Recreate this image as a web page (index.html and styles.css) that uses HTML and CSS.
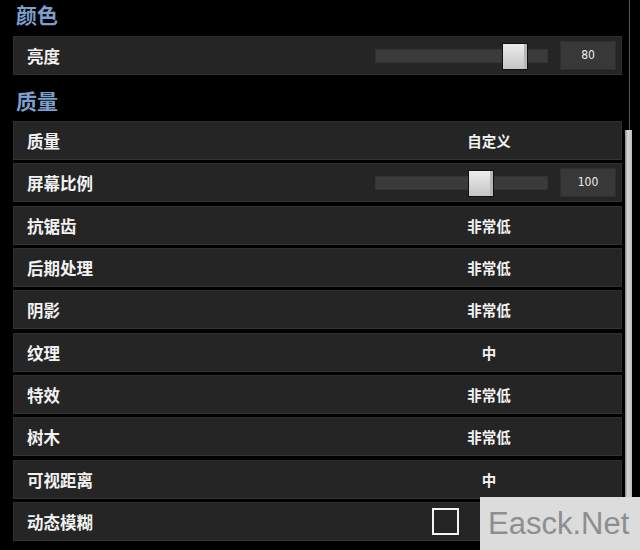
FILE: index.html
```html
<!DOCTYPE html>
<html>

<head>
	<meta charset="utf-8">
	<title>设置</title>
	<link rel="stylesheet" href="styles.css">
</head>

<body>
	<div class="screen">
		<div class="settings">
			<div class="group">
				<h2>颜色</h2>
				<ul class="rows">
					<li class="row">
						<span class="label">亮度</span>
						<div class="slider">
							<div class="track"><span class="thumb" style="left: 126px"></span></div>
							<span class="num">80</span>
						</div>
					</li>
				</ul>
			</div>
			<div class="group">
				<h2>质量</h2>
				<ul class="rows">
					<li class="row">
						<span class="label">质量</span>
						<span class="value">自定义</span>
					</li>
					<li class="row">
						<span class="label">屏幕比例</span>
						<div class="slider">
							<div class="track"><span class="thumb" style="left: 92px"></span></div>
							<span class="num">100</span>
						</div>
					</li>
					<li class="row">
						<span class="label">抗锯齿</span>
						<span class="value">非常低</span>
					</li>
					<li class="row">
						<span class="label">后期处理</span>
						<span class="value">非常低</span>
					</li>
					<li class="row">
						<span class="label">阴影</span>
						<span class="value">非常低</span>
					</li>
					<li class="row">
						<span class="label">纹理</span>
						<span class="value">中</span>
					</li>
					<li class="row">
						<span class="label">特效</span>
						<span class="value">非常低</span>
					</li>
					<li class="row">
						<span class="label">树木</span>
						<span class="value">非常低</span>
					</li>
					<li class="row">
						<span class="label">可视距离</span>
						<span class="value">中</span>
					</li>
					<li class="row">
						<span class="label">动态模糊</span>
						<div class="check"><span class="box"></span></div>
					</li>
				</ul>
			</div>
		</div>
		<div class="scrollbar">
			<span class="rail"></span>
			<span class="grip"></span>
		</div>
	</div>
	<div class="watermark">Easck.Net</div>
</body>

</html>
```

FILE: styles.css
```css
* {
	margin: 0;
	padding: 0;
	box-sizing: border-box;
}

html,
body {
	height: 100%;
	background-color: #000;
	overflow: hidden;
}

body {
	font-family: "Noto Sans CJK SC", "Noto Sans", sans-serif;
	color: #f2f2f2;
}

.screen {
	display: flex;
	height: 100%;
	padding-left: 13px;
}

.settings {
	width: 609px;
}

.group h2 {
	font-size: 21px;
	font-weight: bold;
	line-height: 30px;
	color: #7d9fcd;
	padding: 0 0 6px 3px;
}

.group:first-child h2 {
	line-height: 28px;
	padding-bottom: 8px;
}

.group + .group h2 {
	padding-top: 10px;
}

.rows {
	list-style-type: none;
	display: flex;
	flex-direction: column;
	gap: 3.35px;
}

.row {
	display: grid;
	grid-template-columns: 1fr 246px;
	align-items: center;
	height: 39px;
	background-color: #252525;
	border: 1px solid #2e2e2e;
	border-bottom-color: #343434;
}

.label {
	font-size: 16.5px;
	font-weight: bold;
	padding-left: 13px;
	padding-top: 1px;
}

.value {
	font-size: 14.5px;
	font-weight: bold;
	text-align: center;
	padding-right: 18px;
}

.slider {
	display: flex;
	align-items: center;
	gap: 12px;
}

.track {
	position: relative;
	width: 173px;
	height: 14px;
	background-color: #3b3b3b;
	border: 1px solid #333;
}

.thumb {
	position: absolute;
	top: -7px;
	width: 26px;
	height: 27px;
	background: linear-gradient(#ececec, #c4c4c4);
	border: 1px solid #111;
	box-shadow: inset -3px 0 0 #b8b8b8;
}

.num {
	width: 56px;
	height: 29px;
	line-height: 27px;
	text-align: center;
	font-family: "DejaVu Sans Condensed", "Liberation Sans", sans-serif;
	font-size: 12px;
	color: #eee;
	background-color: #383838;
	border: 1px solid #2f2f2f;
}

.check {
	padding-left: 57px;
	display: flex;
}

.box {
	width: 27px;
	height: 27px;
	border: 2px solid #f4f4f4;
}

.scrollbar {
	display: flex;
	flex-direction: column;
	width: 7px;
	margin-left: 3px;
}

.rail {
	display: block;
	width: 1px;
	height: 130px;
	margin-left: 4px;
	background-color: #5a5a5a;
}

.grip {
	flex: 1;
	background: linear-gradient(to right, #8a8a8a, #d8d8d8 40%, #bcbcbc);
}

.watermark {
	position: absolute;
	right: 0;
	bottom: 0;
	width: 160px;
	height: 53px;
	background-color: #dcdcdc;
	color: #8e8e8e;
	font-family: "Liberation Sans", sans-serif;
	font-size: 31px;
	line-height: 53px;
	padding-left: 8px;
}
```
